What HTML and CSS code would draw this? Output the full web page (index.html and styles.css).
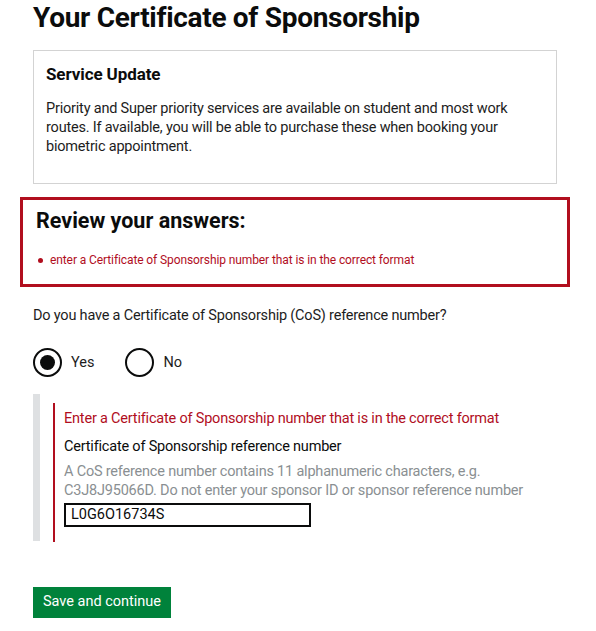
FILE: index.html
```html
<!DOCTYPE html>
<html lang="en">
<head>
<meta charset="utf-8">
<title>Your Certificate of Sponsorship</title>
<link rel="stylesheet" href="styles.css">
</head>
<body>
<main class="page">
  <h1 class="title">Your Certificate of Sponsorship</h1>

  <section class="notice">
    <h2 class="notice-title">Service Update</h2>
    <p class="notice-body">Priority and Super priority services are available on student and most work routes. If available, you will be able to purchase these when booking your biometric appointment.</p>
  </section>

  <section class="error-summary">
    <h2 class="error-summary-title">Review your answers:</h2>
    <ul class="error-list">
      <li>enter a Certificate of Sponsorship number that is in the correct format</li>
    </ul>
  </section>

  <p class="question">Do you have a Certificate of Sponsorship (CoS) reference number?</p>

  <div class="radios">
    <label class="radio">
      <span class="radio-circle checked"></span>
      <span class="radio-label">Yes</span>
    </label>
    <label class="radio">
      <span class="radio-circle"></span>
      <span class="radio-label">No</span>
    </label>
  </div>

  <div class="conditional">
    <div class="field-error">
      <p class="error-message">Enter a Certificate of Sponsorship number that is in the correct format</p>
      <p class="field-label">Certificate of Sponsorship reference number</p>
      <p class="hint">A CoS reference number contains 11 alphanumeric characters, e.g. C3J8J95066D. Do not enter your sponsor ID or sponsor reference number</p>
      <div class="input">L0G6O16734S</div>
    </div>
  </div>

  <button class="button" type="button">Save and continue</button>
</main>
</body>
</html>
```

FILE: styles.css
```css
html, body {
  margin: 0;
  padding: 0;
  background: #ffffff;
}

body {
  font-family: Roboto, "Liberation Sans", Arial, sans-serif;
  color: #0b0c0c;
}

.page {
  padding: 2px 0 0 33px;
  width: 537px;
}

.title {
  margin: 0;
  font-size: 28px;
  line-height: 32px;
  font-weight: 700;
  letter-spacing: -0.3px;
}

.notice {
  margin-top: 16px;
  width: 524px;
  height: 134px;
  box-sizing: border-box;
  border: 1px solid #d3d3d3;
  padding: 13px 12px 0 12px;
}

.notice-title {
  margin: 0;
  font-size: 17px;
  line-height: 20px;
  font-weight: 700;
  letter-spacing: -0.1px;
}

.notice-body {
  margin: 15px 0 0 0;
  font-size: 14.5px;
  line-height: 19px;
  letter-spacing: -0.2px;
  color: #1d1d1d;
}

.error-summary {
  margin: 13px 0 0 -13px;
  width: 550px;
  height: 90px;
  box-sizing: border-box;
  border: 3px solid #b10e1e;
  padding: 8px 13px 0 13px;
}

.error-summary-title {
  margin: 0;
  font-size: 21.5px;
  line-height: 26px;
  font-weight: 700;
}

.error-list {
  list-style: none;
  margin: 18px 0 0 0;
  padding: 0 0 0 14px;
  font-size: 12px;
  line-height: 16px;
  letter-spacing: -0.1px;
  color: #b10e1e;
}

.error-list li {
  position: relative;
}

.error-list li::before {
  content: "";
  position: absolute;
  left: -12px;
  top: 6px;
  width: 5px;
  height: 5px;
  border-radius: 50%;
  background: #b10e1e;
}

.question {
  margin: 19px 0 0 0;
  font-size: 14.5px;
  line-height: 20px;
  letter-spacing: -0.2px;
  color: #1d1d1d;
}

.radios {
  display: flex;
  gap: 31px;
  margin-top: 22px;
}

.radio {
  display: flex;
  align-items: center;
  gap: 9px;
  font-size: 14.5px;
  color: #1d1d1d;
}

.radio-circle {
  width: 29px;
  height: 29px;
  box-sizing: border-box;
  border: 2px solid #0b0c0c;
  border-radius: 50%;
  display: flex;
  align-items: center;
  justify-content: center;
}

.radio-circle.checked::after {
  content: "";
  width: 15px;
  height: 15px;
  border-radius: 50%;
  background: #0b0c0c;
}

.conditional {
  margin-top: 17px;
  width: 500px;
  border-left: 7px solid #dee0e2;
  padding: 9px 0 0 13px;
  height: 138px;
}

.field-error {
  border-left: 2px solid #b10e1e;
  padding: 6px 0 0 9px;
  height: 133px;
}

.error-message {
  margin: 0;
  font-size: 14.5px;
  line-height: 19px;
  letter-spacing: -0.2px;
  color: #b10e1e;
}

.field-label {
  margin: 9px 0 0 0;
  font-size: 14.5px;
  line-height: 19px;
  letter-spacing: -0.2px;
}

.hint {
  margin: 6px 0 0 0;
  font-size: 14.5px;
  line-height: 19px;
  letter-spacing: -0.2px;
  color: #8a8f92;
  width: 480px;
}

.input {
  margin-top: 3px;
  width: 247px;
  height: 24px;
  box-sizing: border-box;
  border: 2px solid #0b0c0c;
  padding: 0 5px;
  font-size: 14.5px;
  line-height: 20px;
}

.button {
  display: block;
  margin-top: 46px;
  width: 138px;
  height: 31px;
  border: 0;
  padding: 0 0 2px 0;
  background: #00823b;
  box-shadow: 0 2px 0 #003618;
  color: #ffffff;
  font-family: inherit;
  font-size: 14.5px;
  line-height: 29px;
  text-align: center;
  cursor: pointer;
}
```
